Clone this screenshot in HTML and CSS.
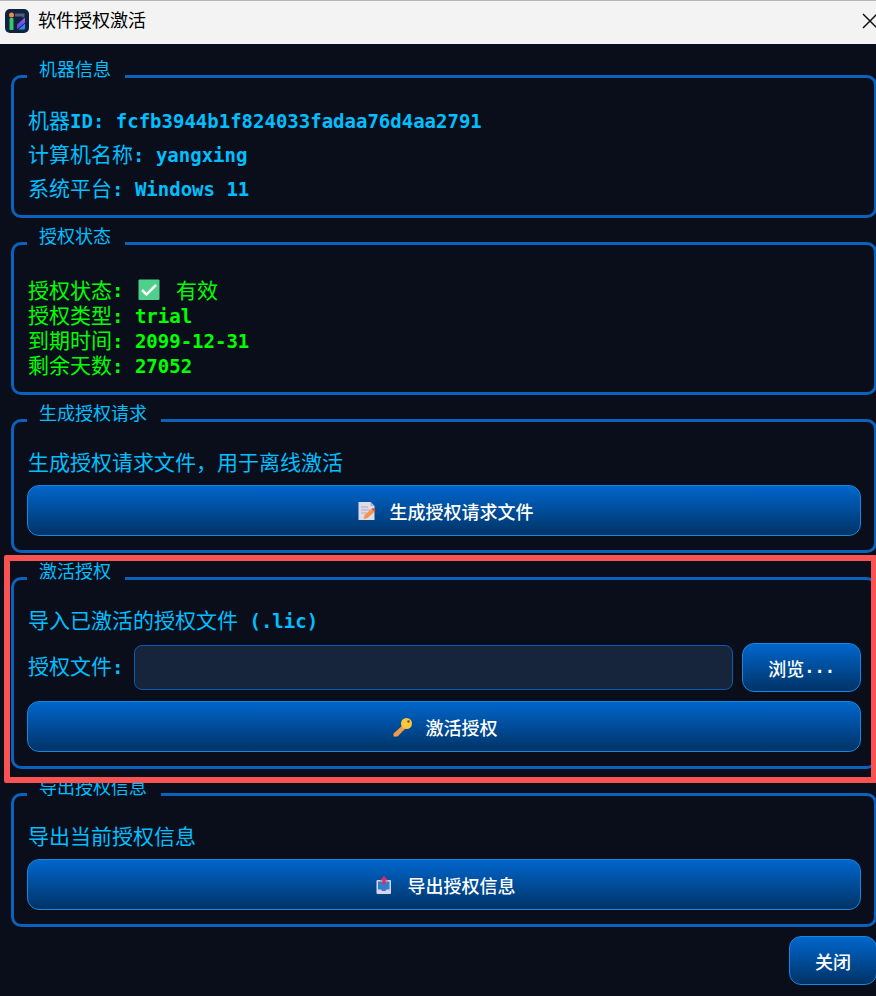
FILE: index.html
```html
<!DOCTYPE html>
<html lang="zh-CN">
<head>
    <meta charset="UTF-8">
    <meta name="viewport" content="width=device-width, initial-scale=1.0">
    <title>软件授权激活</title>
    <link rel="stylesheet" href="styles.css">
</head>
<body>
    <header class="titlebar">
        <svg class="app-icon" viewBox="0 0 24 24" aria-hidden="true">
            <defs>
                <linearGradient id="stroke" x1="0" y1="1" x2="1" y2="0">
                    <stop offset="0" stop-color="#5a3fe0"/>
                    <stop offset="1" stop-color="#9b5cf0"/>
                </linearGradient>
            </defs>
            <rect width="24" height="24" rx="5" fill="#0f2340"/>
            <circle cx="6.500" cy="6" r="2.500" fill="#f08a3c"/>
            <rect x="4.500" y="9" width="4" height="12" rx="1" fill="#3cc46a"/>
            <path d="M10 4.500h9.500v3l-2 1.500v-1.500h-7.500z" fill="#56607a"/>
            <path d="M12 15.500l8-7v5l-8 7z" fill="url(#stroke)"/>
            <path d="M13.500 20.500l6.500-6v4.500q0 1.500-1.500 1.500z" fill="#2a8cf5"/>
        </svg>
        <h1 class="title">软件授权激活</h1>
        <button class="window-close" type="button" aria-label="关闭窗口">
            <svg viewBox="0 0 16 16" aria-hidden="true"><path d="M1 1l14 14M15 1L1 15" fill="none" stroke="#111" stroke-width="1.5"/></svg>
        </button>
    </header>

    <main class="dialog">
        <fieldset class="group">
            <legend>机器信息</legend>
            <div class="info-list">
                <div>机器<span class="mono">ID: fcfb3944b1f824033fadaa76d4aa2791</span></div>
                <div>计算机名称<span class="mono">: yangxing</span></div>
                <div>系统平台<span class="mono">: Windows 11</span></div>
            </div>
        </fieldset>

        <fieldset class="group">
            <legend>授权状态</legend>
            <div class="status">
                <div class="status-line">授权状态<span class="mono">: </span><svg class="check" viewBox="0 0 22 22" role="img" aria-label="有效"><rect x="0.500" y="0.500" width="21" height="20.500" rx="1" fill="#4fd08a"/><path d="M4 11l4.500 4.500L18 6" fill="none" stroke="#fff" stroke-width="2.500"/></svg><span>有效</span></div>
                <div>授权类型<span class="mono">: trial</span></div>
                <div>到期时间<span class="mono">: 2099-12-31</span></div>
                <div>剩余天数<span class="mono">: 27052</span></div>
            </div>
        </fieldset>

        <fieldset class="group">
            <legend>生成授权请求</legend>
            <div class="stack">
                <p class="desc">生成授权请求文件，用于离线激活</p>
                <button class="btn btn-wide" type="button">
                    <svg class="btn-icon" viewBox="0 0 24 24" aria-hidden="true">
                        <path d="M3.500 3h12l4 4v14h-16z" fill="#e0dbe8"/>
                        <path d="M15.500 3v4h4z" fill="#b4abc4"/>
                        <path d="M6 8h7M6 11h9M6 14h6" stroke="#b3a9bd" stroke-width="1.200"/>
                        <path d="M8.500 20l1-4 7-6 3 3-7 6z" fill="#f5924c"/>
                        <path d="M16.500 10l1.500-1q2.500 1 2.500 3l-1 1z" fill="#d94b4b"/>
                    </svg>
                    生成授权请求文件
                </button>
            </div>
        </fieldset>

        <div class="highlight">
            <fieldset class="group">
                <legend>激活授权</legend>
                <div class="stack">
                    <p class="desc">导入已激活的授权文件<span class="mono"> (.lic)</span></p>
                    <div class="file-row">
                        <label for="licenseFile">授权文件<span class="mono">:</span></label>
                        <input type="text" id="licenseFile">
                        <button class="btn" type="button">浏览<span class="mono">...</span></button>
                    </div>
                    <button class="btn btn-wide" type="button">
                        <svg class="btn-icon" viewBox="0 0 24 24" aria-hidden="true">
                            <path d="M12 10l3 3-8.500 8.500H2.500v-3z" fill="#ee9b52"/>
                            <circle cx="15.500" cy="8.500" r="5.500" fill="#fbc73c"/>
                            <circle cx="17.500" cy="6.500" r="1.200" fill="#6b5520"/>
                        </svg>
                        激活授权
                    </button>
                </div>
            </fieldset>
        </div>

        <fieldset class="group">
            <legend>导出授权信息</legend>
            <div class="stack">
                <p class="desc">导出当前授权信息</p>
                <button class="btn btn-wide" type="button">
                    <svg class="btn-icon" viewBox="0 0 24 24" aria-hidden="true">
                        <rect x="3.500" y="7" width="14.500" height="14" rx="1" fill="#d9d5ea"/>
                        <path d="M5 8.500h11.500v8h-3l-1 1.500h-3.500l-1-1.500H5z" fill="#2f7fce"/>
                        <path d="M11 3l4 4.500h-2.500V12h-3V7.500H7z" fill="#d92f62"/>
                    </svg>
                    导出授权信息
                </button>
            </div>
        </fieldset>

        <div class="footer">
            <button class="btn" type="button">关闭</button>
        </div>
    </main>
</body>
</html>
```
FILE: styles.css
```css
* { box-sizing: border-box; }
body { margin: 0; min-height: 100vh; overflow: hidden; background-color: #0a0e1a; color: #00bfff; font-family: 'Liberation Sans', 'Noto Sans CJK SC', sans-serif; font-size: 21px; line-height: 24px; }
button, input { font-family: inherit; }

.titlebar { display: flex; align-items: center; height: 44px; padding: 0 0 3px 5px; border-top: 1px solid #b4b4b4; background-color: #f3f3f3; color: #000; }
.app-icon { width: 24px; height: 24px; margin-right: 9px; }
.title { flex: 1; margin: 0; font-size: 18px; font-weight: 400; }
.window-close { flex: none; margin-right: -2px; padding: 0; border: none; background: none; cursor: pointer; }
.window-close svg { display: block; width: 16px; height: 16px; }

/* the groups run one pixel past the right edge of the window */
.dialog { display: flex; flex-direction: column; gap: 9px; margin-right: -1px; padding: 16px 0 12px 11px; }

.group { min-width: 0; margin: 0; padding: 15px 13px 14px; border: 3px solid #0a62bc; border-radius: 10px; }
.group legend { padding: 0 14px 12px 12px; font-size: 18px; line-height: 21px; }

.mono { font-family: 'DejaVu Sans Mono', monospace; font-size: 19px; font-weight: bold; line-height: 1; white-space: pre; }

.info-list { display: flex; flex-direction: column; gap: 9px; padding-left: 1px; line-height: 25px; }
.status { padding: 3px 0 0 1px; color: #00ff00; line-height: 25px; }
.status-line { display: flex; align-items: center; height: 25px; }
.check { width: 22px; height: 22px; margin: 0 16px 2px 3px; }

.stack { display: flex; flex-direction: column; gap: 9px; }
.desc { margin: 0; padding: 0 0 2px 1px; line-height: 22px; }

.btn { display: flex; align-items: center; justify-content: center; height: 49px; padding: 0 25px; border: 1px solid #1688e0; border-radius: 12px; background: linear-gradient(#0066cc, #003366); color: #fff; font-size: 18px; font-weight: 500; cursor: pointer; }
.btn:hover { background: linear-gradient(#0077ee, #004488); }
.btn .mono { font-size: 17px; }
.btn-wide { width: 100%; height: 51px; }
.btn-icon { width: 24px; height: 24px; margin-right: 11px; }

.file-row { display: flex; align-items: center; gap: 9px; }
.file-row label { padding: 0 2px 2px 1px; }
.file-row input { flex: 1; min-width: 0; height: 45px; padding: 0 12px; border: 1px solid #0a5cb0; border-radius: 8px; background-color: #16243c; color: #fff; font-size: 18px; }

/* marks the step the user has to take */
.highlight { position: relative; }
.highlight::after { content: ''; position: absolute; inset: -7px 0 -14px -7px; border: 6px solid #f85252; border-radius: 2px; pointer-events: none; z-index: 1; }

.footer { display: flex; justify-content: flex-end; }
```
